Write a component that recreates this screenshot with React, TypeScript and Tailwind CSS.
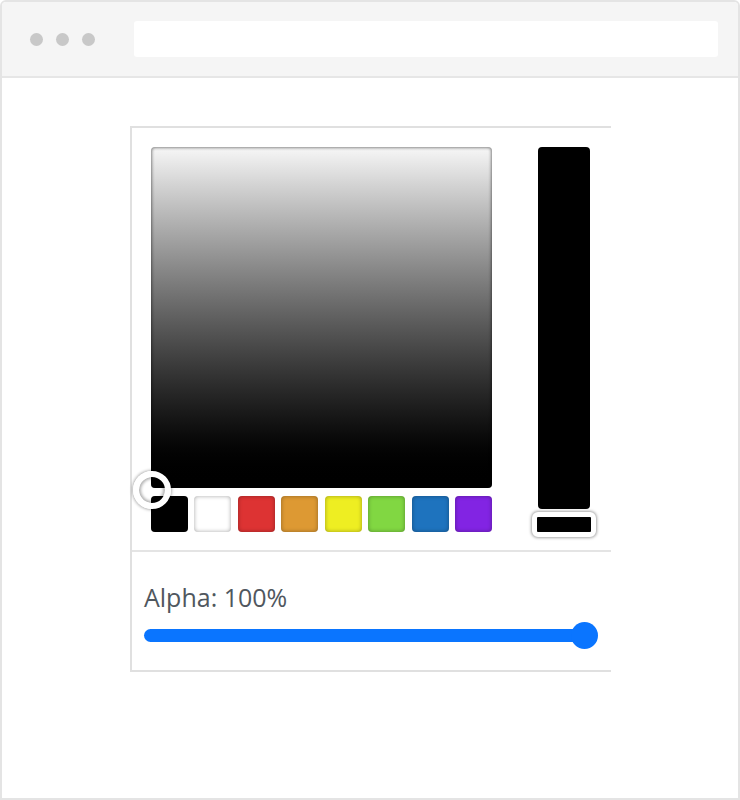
const swatches = ["#000000", "#ffffff", "#dd3333", "#dd9933", "#eeee22", "#81d742", "#1e73be", "#8224e3"];

export default function App() {
  return (
    <div
      className="w-[740px] h-[800px] border-2 border-[#e4e4e4] rounded-t-[6px] overflow-hidden bg-white"
      style={{ fontFamily: '"Open Sans", "Liberation Sans", sans-serif' }}
    >
      {/* Browser chrome */}
      <div className="h-[76px] bg-[#f5f5f5] border-b-2 border-[#e6e6e6] flex items-center">
        <div className="flex gap-[13px] pl-[28px]">
          <span className="w-[13px] h-[13px] rounded-full bg-[#c8c8c8]" />
          <span className="w-[13px] h-[13px] rounded-full bg-[#c8c8c8]" />
          <span className="w-[13px] h-[13px] rounded-full bg-[#c8c8c8]" />
        </div>
        <div className="flex-1 h-[36px] ml-[39px] mr-[20px] bg-white rounded-[3px]" />
      </div>

      {/* Picker card */}
      <div className="mt-[48px] ml-[128px] w-[481px] border-l-2 border-t-2 border-b-2 border-[#e0e0e0]">
        <div className="flex pt-[19px] pl-[19px] pb-[18px]">
          <div className="w-[341px]">
            <div className="relative w-[341px] h-[341px] rounded-[4px] bg-gradient-to-b from-[#f7f7f7] to-black shadow-[inset_0_0_3px_1px_rgba(0,0,0,0.45)]">
              <div className="absolute left-[-18px] top-[324px] w-[38px] h-[38px] rounded-full border-[6px] border-white shadow-[0_0_3px_1px_rgba(0,0,0,0.3),inset_0_0_3px_2px_rgba(0,0,0,0.3)]" />
            </div>
            <div className="flex justify-between mt-[8px]">
              {swatches.map((c) => (
                <div
                  key={c}
                  className="w-[37px] h-[36px] rounded-[4px] shadow-[inset_0_0_4px_rgba(0,0,0,0.35)]"
                  style={{ backgroundColor: c }}
                />
              ))}
            </div>
          </div>
          <div className="relative ml-[46px] w-[52px] h-[362px] bg-black rounded-[4px]">
            <div className="absolute left-[-6px] top-[365px] w-[64px] h-[25px] rounded-[6px] border-[5px] border-white bg-black shadow-[0_0_3px_1px_rgba(0,0,0,0.35)]" />
          </div>
        </div>

        <div className="border-t-2 border-[#e4e4e4] pt-[28px] pl-[12px] pb-[21px]">
          <div className="text-[25px] leading-[34px] text-[#50575e]">Alpha: 100%</div>
          <div className="relative mt-[8px] w-[454px] h-[27px] flex items-center">
            <div className="w-[446px] h-[13px] rounded-full bg-[#0a75ff]" />
            <div className="absolute left-[427px] top-0 w-[27px] h-[27px] rounded-full bg-[#0a75ff]" />
          </div>
        </div>
      </div>
    </div>
  );
}
